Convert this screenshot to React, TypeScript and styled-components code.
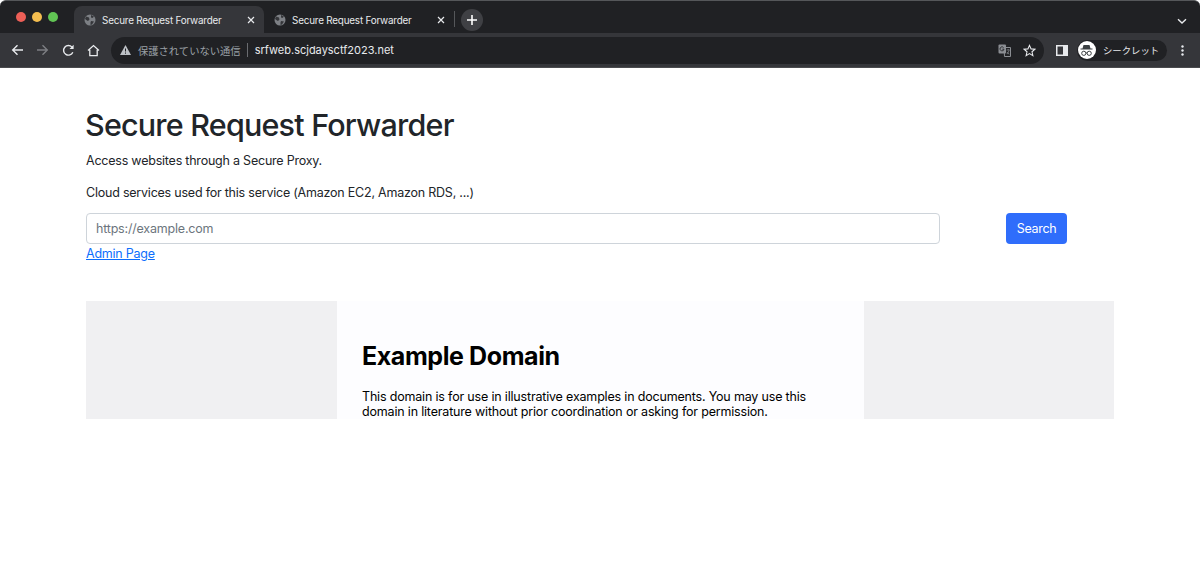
import React from "react";
import styled, { createGlobalStyle } from "styled-components";

const Global = createGlobalStyle`
  html, body { margin: 0; padding: 0; background: #fff; }
  body { font-family: Inter, "Noto Sans CJK JP", sans-serif; width: 1200px; height: 564px; overflow: hidden; }
  * { box-sizing: border-box; }
`;

const Chrome = styled.header`
  height: 68px;
  background: #202124;
  border-top: 1px solid #55575a;
  border-bottom: 1px solid #4a4b4e;
  border-radius: 6px 6px 0 0;
  overflow: hidden;
  display: flex;
  flex-direction: column;
`;
const TabStrip = styled.div`
  height: 32px;
  display: flex;
  align-items: flex-end;
  padding-left: 16px;
`;
const Lights = styled.div`
  display: flex;
  gap: 6px;
  width: 58px;
  height: 100%;
  padding-top: 11px;
`;
const Light = styled.span<{ $c: string }>`
  width: 10px;
  height: 10px;
  border-radius: 50%;
  background: ${(p) => p.$c};
`;
const Tab = styled.div<{ $active?: boolean }>`
  width: 190px;
  height: 27px;
  border-radius: 8px 8px 0 0;
  background: ${(p) => (p.$active ? "#35363a" : "transparent")};
  color: #e8eaed;
  display: flex;
  align-items: center;
  padding: 0 9px 0 10px;
  font-size: 9.9px;
  letter-spacing: -0.2px;
  gap: 6px;
`;
const TabTitle = styled.span`
  flex: 1;
  white-space: nowrap;
`;
const TabDivider = styled.span`
  width: 1px;
  height: 16px;
  background: #55575a;
  margin: 0 6px 6px 0;
`;
const NewTab = styled.span`
  width: 22px;
  height: 22px;
  border-radius: 50%;
  background: #3f4044;
  display: flex;
  align-items: center;
  justify-content: center;
  margin-bottom: 2px;
`;
const StripEnd = styled.span`
  margin-left: auto;
  margin-right: 13px;
  margin-bottom: 8px;
  display: flex;
`;
const Toolbar = styled.div`
  flex: 1;
  background: #35363a;
  display: flex;
  align-items: center;
  padding-left: 5px;
`;
const NavButton = styled.span`
  width: 25.3px;
  display: flex;
  justify-content: center;
  align-items: center;
`;
const Omnibox = styled.div`
  margin-left: 4.8px;
  width: 933px;
  height: 27px;
  border-radius: 14px;
  background: #202124;
  display: flex;
  align-items: center;
  padding: 0 8px 0 9px;
`;
const Warning = styled.span`
  display: flex;
  margin-right: 7px;
`;
const Insecure = styled.span`
  color: #9aa0a6;
  font-size: 10.3px;
  white-space: nowrap;
`;
const Sep = styled.span`
  width: 1px;
  height: 14px;
  background: #6a6c70;
  margin: 0 7px 0 6px;
`;
const Url = styled.span`
  color: #e8eaed;
  font-size: 11px;
  flex: 1;
`;
const OmniIcon = styled.span`
  display: flex;
  margin-left: 12px;
`;
const Side = styled.span`
  display: flex;
  margin-left: 12px;
`;
const Profile = styled.div`
  margin-left: 9px;
  width: 90px;
  height: 21px;
  border-radius: 11px;
  background: #202124;
  display: flex;
  align-items: center;
  padding-left: 1px;
  color: #e8eaed;
  font-size: 9.4px;
  gap: 7px;
`;
const Avatar = styled.span`
  width: 18px;
  height: 18px;
  border-radius: 50%;
  background: #fff;
  display: flex;
  align-items: center;
  justify-content: center;
`;
const Menu = styled.span`
  display: flex;
  margin-left: 14px;
`;

const Main = styled.main`
  padding: 37px 86px 0;
  color: #212529;
`;
const Title = styled.h1`
  margin: 0 0 0 -1px;
  font-size: 30.5px;
  font-weight: 500;
  line-height: 40px;
  letter-spacing: -0.8px;
`;
const Lead = styled.p`
  margin: 6px 0 0;
  font-size: 12.5px;
  line-height: 20px;
  letter-spacing: -0.22px;
`;
const Note = styled(Lead)`
  margin-top: 12px;
`;
const SearchRow = styled.form`
  display: flex;
  margin-top: 10px;
  width: 981px;
  justify-content: space-between;
`;
const Input = styled.input`
  width: 854px;
  height: 31px;
  border: 1px solid #ced4da;
  border-radius: 4px;
  padding: 0 9px;
  font: 12.5px Inter, sans-serif;
  letter-spacing: -0.2px;
  outline: none;
  &::placeholder { color: #6c757d; opacity: 1; }
`;
const Button = styled.button`
  width: 61px;
  height: 31px;
  border: 0;
  border-radius: 4px;
  background: #2f6dfb;
  color: #fff;
  font: 12.5px Inter, sans-serif;
  letter-spacing: -0.3px;
  padding: 0;
`;
const AdminLink = styled.a`
  display: block;
  font-size: 12.5px;
  line-height: 20px;
  color: #0d6efd;
  text-decoration: underline;
  letter-spacing: -0.23px;
`;
const Frame = styled.section`
  margin-top: 37px;
  width: 1028px;
  height: 118px;
  background: #f0f0f2;
  overflow: hidden;
  display: flex;
  justify-content: center;
`;
const Doc = styled.article`
  width: 527px;
  background: #fdfdff;
  padding: 41px 25px 0;
  color: #000;
  margin-left: 1px;
`;
const DocTitle = styled.h2`
  margin: 0;
  font-size: 25px;
  line-height: 29px;
  font-weight: 700;
  letter-spacing: -0.4px;
`;
const DocText = styled.p`
  margin: 18px 0 0;
  font-size: 12.5px;
  line-height: 15px;
  letter-spacing: -0.18px;
  white-space: nowrap;
`;

const Globe = () => (
  <svg width="12" height="12" viewBox="0 0 12 12">
    <circle cx="6" cy="6" r="5.5" fill="#7d8085" />
    <path d="M2 2.5 5 3.5 5.5 5.5 4 7 3 6.5 1 5ZM7 1l3 1.5L8.5 4 7 3.5ZM7 7l3 .5L8 10.5 6.5 11 6.5 8.5Z" fill="#35363a" />
  </svg>
);
const Close = () => (
  <svg width="8" height="8" viewBox="0 0 8 8">
    <path d="M1 1l6 6M7 1 1 7" stroke="#e8eaed" strokeWidth="1.2" fill="none" />
  </svg>
);

export default function App() {
  return (
    <>
      <Global />
      <Chrome>
        <TabStrip>
          <Lights>
            <Light $c="#ed5f57" />
            <Light $c="#f4bd4f" />
            <Light $c="#61c454" />
          </Lights>
          <Tab $active>
            <Globe />
            <TabTitle>Secure Request Forwarder</TabTitle>
            <Close />
          </Tab>
          <Tab>
            <Globe />
            <TabTitle>Secure Request Forwarder</TabTitle>
            <Close />
          </Tab>
          <TabDivider />
          <NewTab>
            <svg width="12" height="12" viewBox="0 0 12 12">
              <path d="M6 1v10M1 6h10" stroke="#fff" strokeWidth="1.6" />
            </svg>
          </NewTab>
          <StripEnd>
            <svg width="10" height="7" viewBox="0 0 10 7">
              <path d="M1 1.2 5 5l4-3.8" stroke="#e8eaed" strokeWidth="1.4" fill="none" />
            </svg>
          </StripEnd>
        </TabStrip>
        <Toolbar>
          <NavButton>
            <svg width="13" height="12" viewBox="0 0 13 12">
              <path d="M12 6H2M6.5 1.2 1.7 6l4.8 4.8" stroke="#e8eaed" strokeWidth="1.4" fill="none" />
            </svg>
          </NavButton>
          <NavButton>
            <svg width="13" height="12" viewBox="0 0 13 12">
              <path d="M1 6h10M6.5 1.2 11.3 6l-4.8 4.8" stroke="#7c7e82" strokeWidth="1.4" fill="none" />
            </svg>
          </NavButton>
          <NavButton>
            <svg width="13" height="13" viewBox="0 0 13 13">
              <path d="M10.8 8.2A4.8 4.8 0 1 1 10 3.1" stroke="#e8eaed" strokeWidth="1.4" fill="none" />
              <path d="M11.6 0.8v4.1H7.5Z" fill="#e8eaed" />
            </svg>
          </NavButton>
          <NavButton>
            <svg width="13" height="13" viewBox="0 0 13 13">
              <path d="M1 6.6 6.5 1.6 12 6.6M2.8 5.8v5.9h7.4V5.8" stroke="#e8eaed" strokeWidth="1.3" fill="none" />
            </svg>
          </NavButton>
          <Omnibox>
            <Warning>
              <svg width="11" height="10" viewBox="0 0 11 10">
                <path d="M5.5 0 11 10H0Z" fill="#bdc1c6" />
                <path d="M5.5 3.5v3M5.5 7.5v1.2" stroke="#202124" strokeWidth="1" />
              </svg>
            </Warning>
            <Insecure>保護されていない通信</Insecure>
            <Sep />
            <Url>srfweb.scjdaysctf2023.net</Url>
            <OmniIcon>
              <svg width="13" height="13" viewBox="0 0 13 13">
                <path d="M6 3.5h6.5v9H6.5Z" fill="none" stroke="#8b8e93" />
                <rect x="0.5" y="0.5" width="7.5" height="9" rx="1" fill="#8b8e93" />
                <path d="M5.6 3.6A2 2 0 1 0 6 5.2H4.3" stroke="#202124" strokeWidth=".8" fill="none" />
                <path d="M8.6 6h3.2M10.2 5.2v.8M8.8 10c1.2-.8 1.9-2 2.2-3.6M9 8c.5 1 1.2 1.700 2.300 2.100" stroke="#8b8e93" strokeWidth=".7" fill="none" />
              </svg>
            </OmniIcon>
            <OmniIcon>
              <svg width="13" height="13" viewBox="0 0 24 24">
                <path d="M12 2.500 14.900 9l7.100.7-5.400 4.700 1.600 7-6.200-3.700-6.200 3.700 1.600-7L2 9.700 9.100 9Z" stroke="#e8eaed" strokeWidth="2" fill="none" />
              </svg>
            </OmniIcon>
          </Omnibox>
          <Side>
            <svg width="12" height="11" viewBox="0 0 12 11">
              <rect x="0.750" y="0.750" width="10.500" height="9.500" fill="none" stroke="#e8eaed" strokeWidth="1.500" />
              <rect x="7" y="1" width="4" height="9" fill="#e8eaed" />
            </svg>
          </Side>
          <Profile>
            <Avatar>
              <svg width="13" height="13" viewBox="0 0 13 13">
                <path d="M3.500 1h6l1 3.500h2v1H.5v-1h2Z" fill="#3c4043" />
                <circle cx="3.800" cy="9.300" r="2.100" fill="none" stroke="#3c4043" />
                <circle cx="9.200" cy="9.300" r="2.100" fill="none" stroke="#3c4043" />
                <path d="M5.900 9h1.200" stroke="#3c4043" />
              </svg>
            </Avatar>
            シークレット
          </Profile>
          <Menu>
            <svg width="3" height="11" viewBox="0 0 3 11">
              <circle cx="1.500" cy="1.500" r="1.200" fill="#e8eaed" />
              <circle cx="1.500" cy="5.500" r="1.200" fill="#e8eaed" />
              <circle cx="1.500" cy="9.500" r="1.200" fill="#e8eaed" />
            </svg>
          </Menu>
        </Toolbar>
      </Chrome>
      <Main>
        <Title>Secure Request Forwarder</Title>
        <Lead>Access websites through a Secure Proxy.</Lead>
        <Note>Cloud services used for this service (Amazon EC2, Amazon RDS, ...)</Note>
        <SearchRow onSubmit={(e) => e.preventDefault()}>
          <Input placeholder="https://example.com" />
          <Button>Search</Button>
        </SearchRow>
        <AdminLink href="#">Admin Page</AdminLink>
        <Frame>
          <Doc>
            <DocTitle>Example Domain</DocTitle>
            <DocText>
              This domain is for use in illustrative examples in documents. You may use this
              <br />
              domain in literature without prior coordination or asking for permission.
            </DocText>
          </Doc>
        </Frame>
      </Main>
    </>
  );
}
